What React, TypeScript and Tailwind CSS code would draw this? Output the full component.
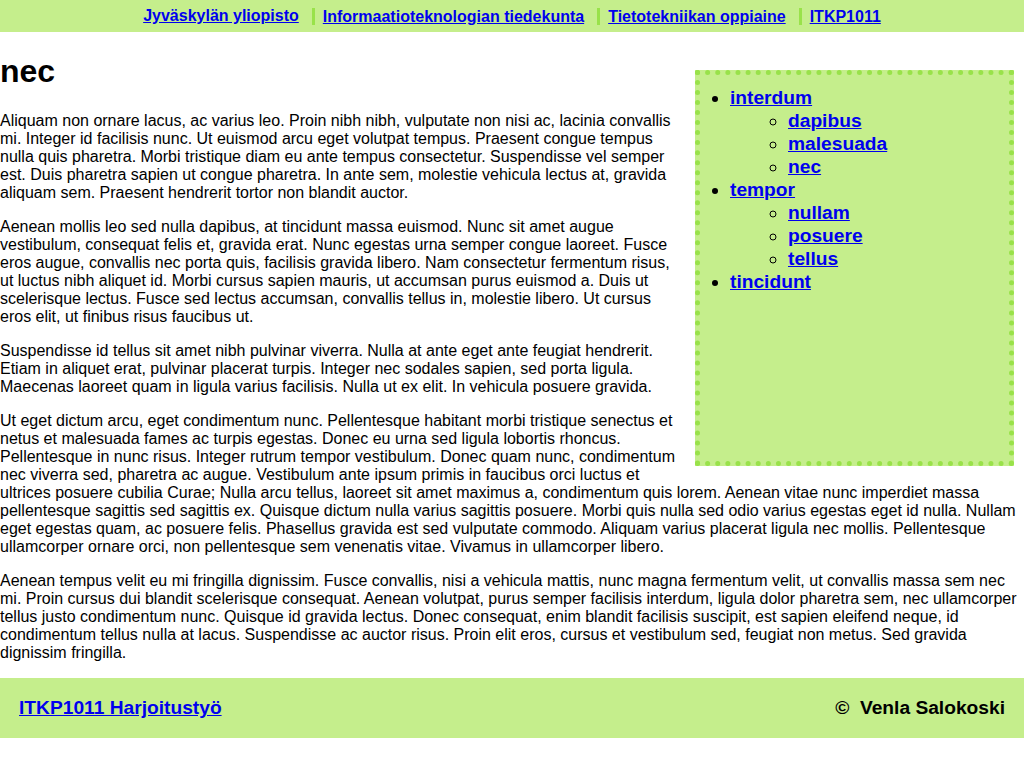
import React from "react";

const navLinks = [
  "Jyväskylän yliopisto",
  "Informaatioteknologian tiedekunta",
  "Tietotekniikan oppiaine",
  "ITKP1011",
];

const menu: { label: string; children: string[] }[] = [
  { label: "interdum", children: ["dapibus", "malesuada", "nec"] },
  { label: "tempor", children: ["nullam", "posuere", "tellus"] },
  { label: "tincidunt", children: [] },
];

const paragraphs = [
  "Aliquam non ornare lacus, ac varius leo. Proin nibh nibh, vulputate non nisi ac, lacinia convallis mi. Integer id facilisis nunc. Ut euismod arcu eget volutpat tempus. Praesent congue tempus nulla quis pharetra. Morbi tristique diam eu ante tempus consectetur. Suspendisse vel semper est. Duis pharetra sapien ut congue pharetra. In ante sem, molestie vehicula lectus at, gravida aliquam sem. Praesent hendrerit tortor non blandit auctor.",
  "Aenean mollis leo sed nulla dapibus, at tincidunt massa euismod. Nunc sit amet augue vestibulum, consequat felis et, gravida erat. Nunc egestas urna semper congue laoreet. Fusce eros augue, convallis nec porta quis, facilisis gravida libero. Nam consectetur fermentum risus, ut luctus nibh aliquet id. Morbi cursus sapien mauris, ut accumsan purus euismod a. Duis ut scelerisque lectus. Fusce sed lectus accumsan, convallis tellus in, molestie libero. Ut cursus eros elit, ut finibus risus faucibus ut.",
  "Suspendisse id tellus sit amet nibh pulvinar viverra. Nulla at ante eget ante feugiat hendrerit. Etiam in aliquet erat, pulvinar placerat turpis. Integer nec sodales sapien, sed porta ligula. Maecenas laoreet quam in ligula varius facilisis. Nulla ut ex elit. In vehicula posuere gravida.",
  "Ut eget dictum arcu, eget condimentum nunc. Pellentesque habitant morbi tristique senectus et netus et malesuada fames ac turpis egestas. Donec eu urna sed ligula lobortis rhoncus. Pellentesque in nunc risus. Integer rutrum tempor vestibulum. Donec quam nunc, condimentum nec viverra sed, pharetra ac augue. Vestibulum ante ipsum primis in faucibus orci luctus et ultrices posuere cubilia Curae; Nulla arcu tellus, laoreet sit amet maximus a, condimentum quis lorem. Aenean vitae nunc imperdiet massa pellentesque sagittis sed sagittis ex. Quisque dictum nulla varius sagittis posuere. Morbi quis nulla sed odio varius egestas eget id nulla. Nullam eget egestas quam, ac posuere felis. Phasellus gravida est sed vulputate commodo. Aliquam varius placerat ligula nec mollis. Pellentesque ullamcorper ornare orci, non pellentesque sem venenatis vitae. Vivamus in ullamcorper libero.",
  "Aenean tempus velit eu mi fringilla dignissim. Fusce convallis, nisi a vehicula mattis, nunc magna fermentum velit, ut convallis massa sem nec mi. Proin cursus dui blandit scelerisque consequat. Aenean volutpat, purus semper facilisis interdum, ligula dolor pharetra sem, nec ullamcorper tellus justo condimentum nunc. Quisque id gravida lectus. Donec consequat, enim blandit facilisis suscipit, est sapien eleifend neque, id condimentum tellus nulla at lacus. Suspendisse ac auctor risus. Proin elit eros, cursus et vestibulum sed, feugiat non metus. Sed gravida dignissim fringilla.",
];

export default function App() {
  return (
    <div className="bg-white text-black font-['Liberation_Sans',Arial,sans-serif] text-[16px] leading-[18px] min-h-[768px]">
      {/* top navigation */}
      <nav className="bg-[#c5ee8c] h-[32px] flex items-center justify-center">
        <ul className="flex items-center gap-[13px]">
          {navLinks.map((l, i) => (
            <li
              key={l}
              className={
                i === 0
                  ? ""
                  : "border-l-[3px] border-[#99e24a] pl-[8px] leading-[17px]"
              }
            >
              <a href="#" className="font-bold text-[#0000ee] underline">
                {l}
              </a>
            </li>
          ))}
        </ul>
      </nav>

      {/* main content */}
      <main className="flow-root">
        <aside className="float-right w-[319px] h-[396px] mt-[38px] mr-[10px] ml-[14px] mb-[8px] bg-[#c5ee8c] border-[5px] border-dotted border-[#99e24a]">
          <ul className="list-disc pl-[30px] mt-[11px] text-[19.2px] leading-[23px] font-bold">
            {menu.map((m) => (
              <li key={m.label}>
                <a href="#" className="text-[#0000ee] underline">
                  {m.label}
                </a>
                {m.children.length > 0 && (
                  <ul className="list-[circle] pl-[58px]">
                    {m.children.map((c) => (
                      <li key={c}>
                        <a href="#" className="text-[#0000ee] underline">
                          {c}
                        </a>
                      </li>
                    ))}
                  </ul>
                )}
              </li>
            ))}
          </ul>
        </aside>
        <h1 className="text-[32px] leading-[37px] font-bold my-[21.44px]">nec</h1>
        {paragraphs.map((p, i) => (
          <p key={i} className="my-[16px]">
            {p}
          </p>
        ))}
      </main>

      {/* footer */}
      <footer className="bg-[#c5ee8c] h-[60px] px-[19px] flex items-center justify-between text-[19.2px] font-bold">
        <a href="#" className="text-[#0000ee] underline">
          ITKP1011 Harjoitustyö
        </a>
        <span>©&nbsp; Venla Salokoski</span>
      </footer>
    </div>
  );
}
